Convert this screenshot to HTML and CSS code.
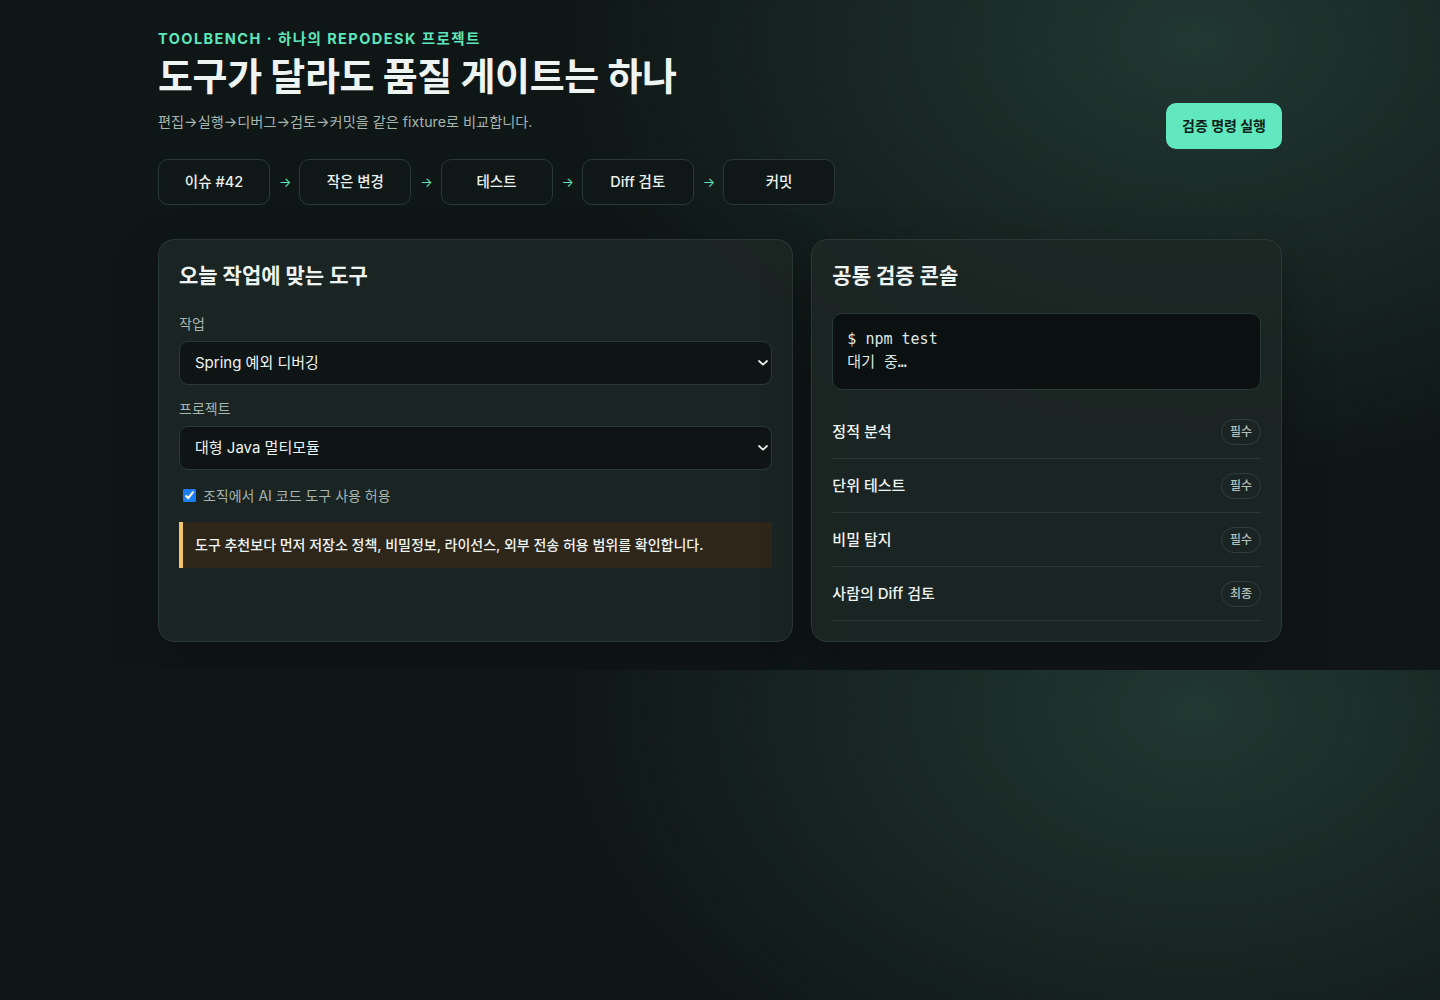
FILE: index.html
```html
<!DOCTYPE html>
<html lang="ko">
<head>
<meta charset="utf-8">
<title>Toolbench</title>
<link rel="stylesheet" href="styles.css">
</head>
<body>
<main class="page">
  <header class="hero">
    <div class="hero-text">
      <div class="eyebrow">TOOLBENCH · 하나의 REPODESK 프로젝트</div>
      <h1 class="title">도구가 달라도 품질 게이트는 하나</h1>
      <p class="lead">편집→실행→디버그→검토→커밋을 같은 fixture로 비교합니다.</p>
    </div>
    <button class="run-btn" type="button">검증 명령 실행</button>
  </header>

  <nav class="flow">
    <div class="step">이슈 #42</div>
    <span class="arrow">→</span>
    <div class="step">작은 변경</div>
    <span class="arrow">→</span>
    <div class="step">테스트</div>
    <span class="arrow">→</span>
    <div class="step">Diff 검토</div>
    <span class="arrow">→</span>
    <div class="step">커밋</div>
  </nav>

  <section class="grid">
    <article class="card">
      <h2 class="card-title">오늘 작업에 맞는 도구</h2>
      <div class="field">
        <label class="field-label" for="task">작업</label>
        <div class="select-wrap">
          <select id="task" class="select">
            <option>Spring 예외 디버깅</option>
          </select>
          <span class="chev"><svg width="10" height="6" viewBox="0 0 10 6"><path d="M1 1l4 3.6L9 1" fill="none" stroke="#e8f0ed" stroke-width="1.8" stroke-linecap="round" stroke-linejoin="round"/></svg></span>
        </div>
      </div>
      <div class="field">
        <label class="field-label" for="proj">프로젝트</label>
        <div class="select-wrap">
          <select id="proj" class="select">
            <option>대형 Java 멀티모듈</option>
          </select>
          <span class="chev"><svg width="10" height="6" viewBox="0 0 10 6"><path d="M1 1l4 3.6L9 1" fill="none" stroke="#e8f0ed" stroke-width="1.8" stroke-linecap="round" stroke-linejoin="round"/></svg></span>
        </div>
      </div>
      <label class="check"><input type="checkbox" checked> 조직에서 AI 코드 도구 사용 허용</label>
      <div class="notice">도구 추천보다 먼저 저장소 정책, 비밀정보, 라이선스, 외부 전송 허용 범위를 확인합니다.</div>
    </article>

    <article class="card">
      <h2 class="card-title">공통 검증 콘솔</h2>
      <pre class="console">$ npm test
대기 중…</pre>
      <ul class="checks">
        <li class="check-row"><span>정적 분석</span><span class="badge">필수</span></li>
        <li class="check-row"><span>단위 테스트</span><span class="badge">필수</span></li>
        <li class="check-row"><span>비밀 탐지</span><span class="badge">필수</span></li>
        <li class="check-row"><span>사람의 Diff 검토</span><span class="badge">최종</span></li>
      </ul>
    </article>
  </section>
</main>
</body>
</html>
```

FILE: styles.css
```css
* { box-sizing: border-box; }

body {
  margin: 0;
  color: #e8f0ed;
  font-family: "Inter", "Noto Sans CJK KR", sans-serif;
  background:
    radial-gradient(ellipse 900px 620px at 83% 6%, rgba(48, 82, 72, 0.55), rgba(48, 82, 72, 0) 70%),
    #0f1716;
}

.page {
  max-width: 1124px;
  margin: 0 auto;
  padding: 28px 0 28px;
}

.hero {
  display: flex;
  justify-content: space-between;
  align-items: flex-end;
}

.eyebrow {
  color: #5fe5bb;
  font-size: 14.5px;
  line-height: 21px;
  font-weight: 700;
  letter-spacing: 0.1em;
}

.title {
  margin: 4px 0 0;
  font-size: 38px;
  line-height: 47px;
  font-weight: 700;
  letter-spacing: -0.01em;
  color: #eef4f2;
}

.lead {
  margin: 11px 0 16px;
  font-size: 14.2px;
  line-height: 22px;
  color: #a6b4b0;
}

.run-btn {
  font-family: inherit;
  font-size: 14px;
  line-height: 20px;
  font-weight: 700;
  color: #0b1e18;
  background: #62e8be;
  border: 0;
  border-radius: 10px;
  padding: 13px 16px;
  cursor: pointer;
}

.flow {
  display: flex;
  align-items: center;
  gap: 9px;
  margin-top: 10px;
}

.step {
  width: 112px;
  padding: 12px 0;
  text-align: center;
  font-size: 14.5px;
  line-height: 20px;
  font-weight: 500;
  color: #eaf1ee;
  background: #101817;
  border: 1px solid #2a3835;
  border-radius: 10px;
}

.arrow {
  color: #5fe5bb;
  font-size: 13px;
  line-height: 20px;
  width: 11.25px;
  text-align: center;
}

.grid {
  display: grid;
  grid-template-columns: 1.35fr 1fr;
  gap: 18px;
  margin-top: 34px;
}

.card {
  background: rgba(29, 39, 36, 0.82);
  border: 1px solid #2a3835;
  border-radius: 16px;
  padding: 22px 20px 20px;
  box-shadow: 0 20px 50px rgba(0, 0, 0, 0.28);
}

.card-title {
  margin: 0 0 24px;
  font-size: 21px;
  line-height: 27px;
  font-weight: 700;
  color: #eef4f2;
}

.field { margin-bottom: 13px; }

.field-label {
  display: block;
  font-size: 14px;
  line-height: 21px;
  color: #a6b4b0;
  margin-bottom: 7px;
}

.select-wrap { position: relative; }

.select {
  display: block;
  width: 100%;
  appearance: none;
  -webkit-appearance: none;
  font-family: inherit;
  font-size: 15px;
  line-height: 20px;
  font-weight: 400;
  color: #eef4f2;
  background: #0e1514;
  border: 1px solid #2a3835;
  border-radius: 9px;
  padding: 11px 28px 11px 15px;
  height: 44px;
}

.chev {
  position: absolute;
  right: 4px;
  top: 19px;
  width: 10px;
  height: 6px;
  display: block;
  pointer-events: none;
}
.chev svg { display: block; }

.check {
  display: block;
  margin: 15px 0 16px;
  font-size: 14px;
  line-height: 21px;
  color: #a6b4b0;
}

.check input {
  accent-color: #1c7cf4;
  margin: 0 3px 0 4px;
  width: 13px;
  height: 13px;
  vertical-align: -1px;
}

.notice {
  border-left: 4px solid #f6c36a;
  background: #2e2619;
  padding: 12px 14px 12px 12px;
  font-size: 14px;
  line-height: 22px;
  font-weight: 500;
  color: #eef4f2;
}

.console {
  margin: 0;
  background: #0b1110;
  border: 1px solid #2a3835;
  border-radius: 10px;
  padding: 14px 14px 15px;
  font-family: "DejaVu Sans Mono", "Noto Sans CJK KR", monospace;
  font-size: 15px;
  line-height: 23px;
  color: #dfe8e5;
}

.checks {
  list-style: none;
  margin: 15px 0 0;
  padding: 0;
}

.check-row {
  display: flex;
  justify-content: space-between;
  align-items: center;
  padding: 13.5px 0;
  border-bottom: 1px solid #2a3835;
  font-size: 15px;
  line-height: 22px;
  font-weight: 500;
  color: #eef4f2;
}

.badge {
  font-size: 12px;
  line-height: 18px;
  font-weight: 500;
  color: #b3c0bc;
  border: 1px solid #2e3d3a;
  border-radius: 999px;
  padding: 3px 8px;
}
```
